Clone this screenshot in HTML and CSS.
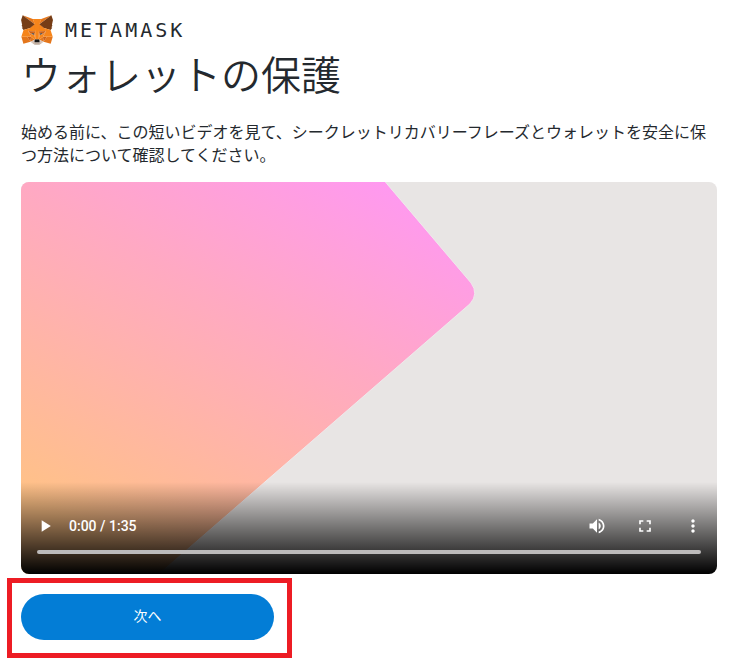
FILE: index.html
```html
<!DOCTYPE html>
<html lang="ja">
<head>
<meta charset="utf-8">
<meta name="viewport" content="width=device-width, initial-scale=1">
<title>MetaMask</title>
<link rel="stylesheet" href="styles.css">
</head>
<body>
<header class="brand">
  <svg class="brand-fox" viewBox="31 35 256 237" aria-hidden="true">
    <g fill="#e4761b">
      <path d="M274.1 35.5 174.6 109.4 193 65.8zM44.4 35.5 143.1 110.1 125.6 65.8zM238.3 206.8 211.8 247.4 268.5 263 284.8 207.7zM33.9 207.7 50.1 263 106.8 247.4 80.3 206.8z"/>
      <path d="M103.6 138.2 87.8 162.1 144.1 164.6 142.1 104.1zM214.9 138.2 175.9 103.4 174.6 164.6 230.8 162.1zM106.8 247.4 140.6 230.9 111.4 208.1zM177.9 230.9 211.8 247.4 207.1 208.1z"/>
    </g>
    <path fill="#f6851b" d="M103.6 138.2 140.6 106.9 144.1 164.600 87.8 162.1zM214.9 138.2 177.9 106.9 174.6 164.6 230.8 162.1z"/>
    <path fill="#d7c1b3" d="M211.8 247.4 177.9 230.9 180.6 253 180.3 262.3zM106.8 247.4 138.3 262.3 138.1 253 140.6 230.9z"/>
    <path fill="#233447" d="M138.8 193.5 110.6 185.2 130.5 176.1zM179.7 193.5 188 176.1 208 185.2z"/>
    <path fill="#cd6116" d="M106.8 247.4 111.6 206.8 80.3 207.7zM207 206.8 211.8 247.4 238.3 207.7zM230.8 162.1 174.6 164.6 179.8 193.5 188.1 176.1 208.1 185.2zM110.6 185.2 130.6 176.1 138.8 193.5 144.1 164.6 87.8 162.1z"/>
    <path fill="#e4751f" d="M87.8 162.1 111.4 208.1 110.6 185.2zM208.1 185.2 207.1 208.1 230.8 162.1zM144.1 164.6 138.8 193.5 145.4 227.6 146.9 182.7zM174.6 164.6 171.9 182.6 173.1 227.6 179.8 193.5z"/>
    <path fill="#f6851b" d="M179.8 193.5 173.1 227.6 177.9 230.9 207.1 208.1 208.1 185.2zM110.6 185.2 111.4 208.1 140.6 230.9 145.4 227.6 138.8 193.5z"/>
    <path fill="#c0ad9e" d="M180.3 262.3 180.6 253 178.1 250.8H140.4L138.1 253 138.3 262.3 106.8 247.4 117.8 256.4 140.1 271.9H178.4L200.8 256.4 211.8 247.4z"/>
    <path fill="#161616" d="M177.9 230.9 173.1 227.6H145.4L140.6 230.9 138.1 253 140.4 250.8H178.1L180.6 253z"/>
    <path fill="#763d16" d="M278.3 114.2 286.8 73.4 274.1 35.5 177.9 106.9 214.9 138.2 267.2 153.5 278.8 140 273.8 136.4 281.8 129.1 275.6 124.3 283.6 118.2zM31.8 73.4 40.3 114.2 34.9 118.2 42.9 124.3 36.8 129.1 44.8 136.4 39.8 140 51.3 153.5 103.6 138.2 140.6 106.9 44.4 35.5z"/>
    <path fill="#f6851b" d="M267.2 153.5 214.9 138.2 230.8 162.1 207.1 208.1H284.8zM103.6 138.2 51.3 153.5 33.9 207.7 111.4 208.1 87.8 162.1zM174.6 164.6 177.9 106.9 193.1 65.8H125.6L140.6 106.9 144.1 164.6 145.3 182.8 145.4 227.6H173.1L173.3 182.8z"/>
  </svg>
  <span class="brand-name">METAMASK</span>
</header>
<main>
  <h1 class="title">ウォレットの保護</h1>
  <p class="lead">始める前に、この短いビデオを見て、シークレットリカバリーフレーズとウォレットを安全に保つ方法について確認してください。</p>

  <section class="player" aria-label="ビデオ">
    <svg class="player-frame" viewBox="0 0 696 392" preserveAspectRatio="none" aria-hidden="true">
      <defs>
        <linearGradient id="sheet" gradientUnits="userSpaceOnUse" x1="0" y1="318" x2="222" y2="-86">
          <stop offset="0" stop-color="#ffc286"/>
          <stop offset=".6" stop-color="#ffa9c3"/>
          <stop offset="1" stop-color="#ff98f2"/>
        </linearGradient>
      </defs>
      <rect width="696" height="392" fill="#e8e5e4"/>
      <path d="M-4 -4H361L450 101Q458 112 449 122L134 396H-4z" fill="url(#sheet)" stroke="#efe9ec" stroke-width="1"/>
    </svg>
    <div class="controls">
      <div class="controls-row">
        <button class="control" type="button" aria-label="再生"><svg viewBox="0 0 24 24"><path d="M8 5v14l11-7z"/></svg></button>
        <span class="time">0:00 / 1:35</span>
        <button class="control" type="button" aria-label="ミュート"><svg viewBox="0 0 24 24"><path d="M3 9v6h4l5 5V4L7 9H3zm13.500 3c0-1.770-1.020-3.290-2.500-4.030v8.050c1.480-.73 2.500-2.250 2.500-4.020zM14 3.230v2.060c2.890.86 5 3.540 5 6.710s-2.110 5.850-5 6.710v2.060c4.010-.91 7-4.490 7-8.770s-2.990-7.860-7-8.770z"/></svg></button>
        <button class="control" type="button" aria-label="全画面"><svg viewBox="0 0 24 24"><path d="M7 14H5v5h5v-2H7v-3zm-2-4h2V7h3V5H5v5zm12 7h-3v2h5v-5h-2v3zM14 5v2h3v3h2V5h-5z"/></svg></button>
        <button class="control" type="button" aria-label="その他"><svg viewBox="0 0 24 24"><path d="M12 8c1.100 0 2-.9 2-2s-.9-2-2-2-2 .9-2 2 .9 2 2 2zm0 2c-1.100 0-2 .9-2 2s.9 2 2 2 2-.9 2-2-.9-2-2-2zm0 6c-1.100 0-2 .9-2 2s.9 2 2 2 2-.9 2-2-.9-2-2-2z"/></svg></button>
      </div>
      <input class="timeline" type="range" min="0" max="95" value="0" aria-label="再生位置">
    </div>
  </section>

  <div class="highlight">
    <button class="next" type="button">次へ</button>
  </div>
</main>
</body>
</html>
```
FILE: styles.css
```css
* {
  box-sizing: border-box;
}

body {
  margin: 0;
  padding: 15px 22px 8px 21px;
  background: #fff;
  color: #24292e;
  font-family: Roboto, "Noto Sans CJK JP", sans-serif;
  font-size: 16px;
}

.brand {
  display: flex;
  align-items: center;
  gap: 12px;
  height: 30px;
}

.brand-fox {
  width: 32px;
  height: 30px;
}

.brand-name {
  font-family: "DejaVu Sans Mono", monospace;
  font-size: 20px;
  line-height: 30px;
  letter-spacing: 3px;
}

.title {
  margin: 4px 0 23px;
  font-family: "Noto Sans CJK JP", sans-serif;
  font-size: 40px;
  font-weight: 350;
  line-height: 48px;
}

.lead {
  margin: 0 0 16px;
  font-family: "Noto Sans CJK JP", sans-serif;
  font-weight: 400;
  line-height: 23px;
}

.player {
  position: relative;
  overflow: hidden;
  aspect-ratio: 16 / 9;
  border-radius: 8px;
}

.player-frame {
  display: block;
  width: 100%;
  height: 100%;
}

.controls {
  position: absolute;
  inset: auto 0 0;
  padding: 20px 0;
  background: linear-gradient(transparent, #000);
}

.controls-row {
  display: flex;
  align-items: center;
  height: 48px;
}

.control {
  display: grid;
  place-items: center;
  width: 48px;
  height: 48px;
  padding: 0;
  border: 0;
  background: none;
}

.control svg {
  width: 20px;
  height: 20px;
  fill: #fff;
}

.time {
  flex: 1;
  color: #fff;
  font-size: 14px;
  font-weight: 500;
  line-height: 20px;
}

.timeline {
  display: block;
  width: calc(100% - 32px);
  height: 4px;
  margin: 0 16px;
  border-radius: 2px;
  background: #bdbbbb;
  appearance: none;
}

.timeline::-webkit-slider-thumb {
  width: 0;
  height: 0;
  appearance: none;
}

.highlight {
  width: 285px;
  max-width: 100%;
  margin: 4px 0 0 -14px;
  padding: 11px 13px 13px 9px;
  border: 5px solid #ed1c24;
}

.next {
  display: block;
  width: 100%;
  height: 46px;
  padding: 0 0 4px;
  border: 0;
  border-radius: 23px;
  background: #037dd6;
  color: #fff;
  font-family: "Noto Sans CJK JP", sans-serif;
  font-size: 14px;
  line-height: 20px;
}
```
